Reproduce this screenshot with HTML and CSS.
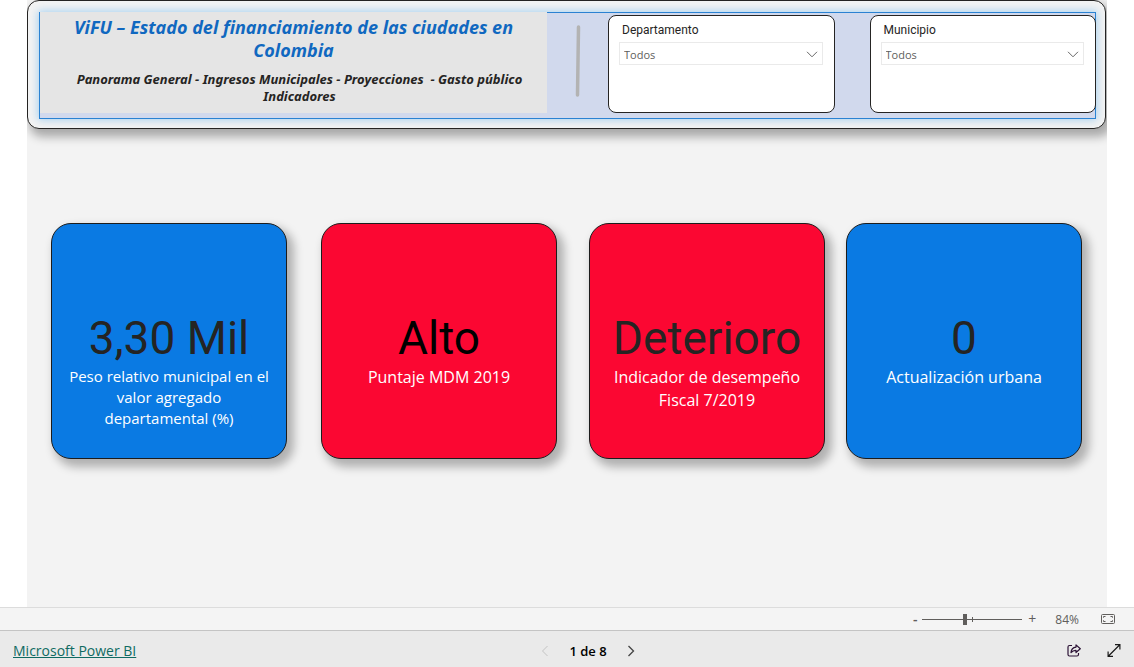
FILE: index.html
```html
<!DOCTYPE html>
<html lang="es">
<head>
<meta charset="utf-8">
<meta name="viewport" content="width=device-width, initial-scale=1">
<title>ViFU – Estado del financiamiento</title>
<link rel="stylesheet" href="styles.css">
</head>
<body>
<main class="report">
  <header class="banner">
    <div class="banner-inner">
      <div class="heading">
        <h1 class="title">ViFU – Estado del financiamiento de las ciudades en Colombia</h1>
        <p class="subtitle">Panorama General - Ingresos Municipales - Proyecciones &nbsp;- Gasto público Indicadores</p>
      </div>
      <svg class="divider" viewBox="0 0 6 74" aria-hidden="true"><path d="M3.5 3 2.5 71" stroke="#b3b3b3" stroke-width="3.5" stroke-linecap="round"/></svg>
      <div class="slicers">
        <div class="slicer">
          <label class="slicer-label" for="departamento">Departamento</label>
          <div class="select-box">
            <select class="select" id="departamento"><option>Todos</option></select>
            <svg class="chevron" viewBox="0 0 12 7" aria-hidden="true"><path d="M1 .8 6 5.8 11 .8"/></svg>
          </div>
        </div>
        <div class="slicer">
          <label class="slicer-label" for="municipio">Municipio</label>
          <div class="select-box">
            <select class="select" id="municipio"><option>Todos</option></select>
            <svg class="chevron" viewBox="0 0 12 7" aria-hidden="true"><path d="M1 .8 6 5.8 11 .8"/></svg>
          </div>
        </div>
      </div>
    </div>
  </header>
  <section class="cards">
    <article class="card card-blue card-long">
      <div class="value">3,30 Mil</div>
      <p class="caption">Peso relativo municipal en el valor agregado departamental (%)</p>
    </article>
    <article class="card card-red">
      <div class="value value-black">Alto</div>
      <p class="caption">Puntaje MDM 2019</p>
    </article>
    <article class="card card-red">
      <div class="value">Deterioro</div>
      <p class="caption">Indicador de desempeño Fiscal 7/2019</p>
    </article>
    <article class="card card-blue">
      <div class="value">0</div>
      <p class="caption">Actualización urbana</p>
    </article>
  </section>
</main>
<div class="zoom-bar">
  <button class="zoom-step" type="button" aria-label="Alejar">-</button>
  <input class="zoom-range" type="range" min="0" max="100" value="42" aria-label="Zoom">
  <button class="zoom-step zoom-in" type="button" aria-label="Acercar">+</button>
  <span class="zoom-value">84%</span>
  <button class="icon-button" type="button" aria-label="Ajustar a la página">
    <svg width="14" height="10" viewBox="0 0 14 10" fill="none" stroke="#605e5c"><rect x=".5" y=".5" width="13" height="9" rx="1"/><path d="M4.5 2.5h-2v1.2M2.5 6.3v1.2h2M9.5 2.5h2v1.2M11.5 6.3v1.2h-2"/></svg>
  </button>
</div>
<footer class="footer">
  <a class="brand" href="#">Microsoft Power BI</a>
  <nav class="pager" aria-label="Páginas">
    <button class="icon-button" type="button" aria-label="Anterior" disabled>
      <svg width="8" height="12" viewBox="0 0 8 12" fill="none" stroke="#c4c4c4"><path d="M6.5 1 1.5 6l5 5"/></svg>
    </button>
    <span class="page-count">1 de 8</span>
    <button class="icon-button" type="button" aria-label="Siguiente">
      <svg width="8" height="12" viewBox="0 0 8 12" fill="none" stroke="#444" stroke-width="1.3"><path d="M1.5 1l5 5-5 5"/></svg>
    </button>
  </nav>
  <div class="actions">
    <button class="icon-button" type="button" aria-label="Compartir">
      <svg width="14" height="13" viewBox="0 0 14 13" fill="none" stroke="#2b1235" stroke-width="1.2" stroke-linejoin="round"><path d="M5 1.500H2.500q-1.500 0-1.500 1.500v7.500q0 1.500 1.500 1.500h7.500q1.500 0 1.500-1.500V9"/><path d="M9 .900 13.300 4.700 9 8.500V6.300Q6 6.200 4 8.600 4.400 3.600 9 3.100Z"/></svg>
    </button>
    <button class="icon-button" type="button" aria-label="Pantalla completa">
      <svg width="14" height="13" viewBox="0 0 14 13" fill="none" stroke="#1b1b1b" stroke-width="1.2"><path d="M1.5 12 12.5 1M8 .7h4.900V5.500M1.100 7.500v4.900H6"/></svg>
    </button>
  </div>
</footer>
</body>
</html>
```
FILE: styles.css
```css
* { box-sizing: border-box; }

body {
  margin: 0;
  min-height: 100vh;
  display: flex;
  flex-direction: column;
  background: #fff;
  color: #252423;
  font-family: "Open Sans", "Noto Sans", sans-serif;
}

button {
  padding: 0;
  border: 0;
  background: none;
  color: inherit;
  font: inherit;
}

.report {
  flex: 1;
  margin: 0 27px;
  background: #f3f3f3;
  overflow: hidden;
}

.banner {
  margin-right: 1px;
  padding: 11px 9px 9px 11px;
  border: 1px solid #252423;
  border-radius: 12px;
  background: #f3f3f3;
  box-shadow: 4px 6px 10px 2px rgba(0, 0, 0, .3);
}

.banner-inner {
  display: flex;
  border: 1px solid #2a82d2;
  background: #d1d9ed;
  box-shadow: 0 0 8px 1px rgba(90, 175, 240, .5);
}

.heading {
  flex: 463;
  margin: -1px 0 5px;
  padding: 4px 16px 8px 28px;
  background: #e5e5e5;
  text-align: center;
  font-style: italic;
}

.title {
  margin: 0 12px 9px 0;
  color: #1068c0;
  font-size: 18px;
  line-height: 23px;
}

.subtitle {
  margin: 0;
  font-family: "Noto Sans", sans-serif;
  font-size: 13px;
  font-weight: 700;
  line-height: 17px;
}

.divider {
  width: 6px;
  height: 74px;
  margin: 11px 27px 0 28px;
}

.slicers {
  flex: 488;
  display: flex;
  gap: 35px;
  padding: 2px 0 5px;
  margin-right: -1px;
}

.slicer {
  flex: 1;
  padding: 7px 11px 7px 10px;
  border: 1px solid #252423;
  border-radius: 8px;
  background: #fff;
}

.slicer-label {
  display: block;
  margin: 0 3px 4px;
  font-family: Roboto, sans-serif;
  font-size: 12px;
  line-height: 15px;
}

.select-box {
  position: relative;
  border: 1px solid #eaeaea;
}

.select {
  display: block;
  width: 100%;
  height: 21px;
  padding: 2px 4px 0;
  border: 0;
  appearance: none;
  background: none;
  color: #605e5c;
  font-family: "Open Sans", sans-serif;
  font-size: 11px;
}

.chevron {
  position: absolute;
  top: 8px;
  right: 4px;
  width: 12px;
  height: 7px;
  fill: none;
  stroke: #666;
  pointer-events: none;
}

.cards {
  display: grid;
  grid-template-columns: 236fr 34fr 236fr 32fr 236fr 21fr 236fr;
  padding: 94px 25px 24px 24px;
}

.card {
  min-height: 236px;
  padding: 86px 12px 24px;
  border: 1px solid #1c1c1c;
  border-radius: 20px;
  box-shadow: 5px 6px 10px 2px rgba(0, 0, 0, .28);
  text-align: center;
}

.card:nth-child(2) { grid-column: 3; }
.card:nth-child(3) { grid-column: 5; }
.card:nth-child(4) { grid-column: 7; }

.card-blue { background: #0a7ae3; }
.card-red { background: #fb0732; }

.value {
  font-family: Roboto, sans-serif;
  font-size: 46px;
  line-height: 56px;
}

.value-black { color: #000; }

.caption {
  margin: 0;
  color: #fff;
  font-size: 16px;
  line-height: 23px;
}

.card-long .caption {
  font-size: 15px;
  line-height: 21px;
}

.zoom-bar {
  display: flex;
  align-items: center;
  justify-content: flex-end;
  height: 23px;
  padding-right: 19px;
  border-top: 1px solid #dcdcdc;
  background: #f4f4f4;
  color: #605e5c;
}

.zoom-step {
  width: 6px;
  font-size: 14px;
  font-weight: 600;
  line-height: 20px;
}

.zoom-in {
  width: 8px;
  font-weight: 400;
}

.zoom-range {
  width: 100px;
  height: 11px;
  margin: 0 6px 0 4px;
  appearance: none;
  background:
    linear-gradient(#605e5c, #605e5c) 50% 50% / 1px 5px no-repeat,
    linear-gradient(#605e5c, #605e5c) 0 50% / 100% 1px no-repeat;
}

.zoom-range::-webkit-slider-thumb {
  appearance: none;
  width: 4px;
  height: 11px;
  background: #605e5c;
}

.zoom-value {
  margin: 0 22px 0 19px;
  font-size: 12px;
}

.icon-button {
  display: flex;
  align-items: center;
}

.footer {
  display: grid;
  grid-template-columns: 1fr auto 1fr;
  align-items: center;
  height: 37px;
  padding: 3px 13px 0;
  border-top: 1px solid #c4c4c4;
  background: #eaeaea;
}

.brand {
  justify-self: start;
  color: #0f6a62;
  font-size: 14px;
}

.pager {
  display: flex;
  align-items: center;
  gap: 20px;
  margin-right: -42px;
}

.page-count {
  color: #000;
  font-size: 13px;
  font-weight: 600;
}

.actions {
  display: flex;
  justify-content: flex-end;
  gap: 26px;
}
```
